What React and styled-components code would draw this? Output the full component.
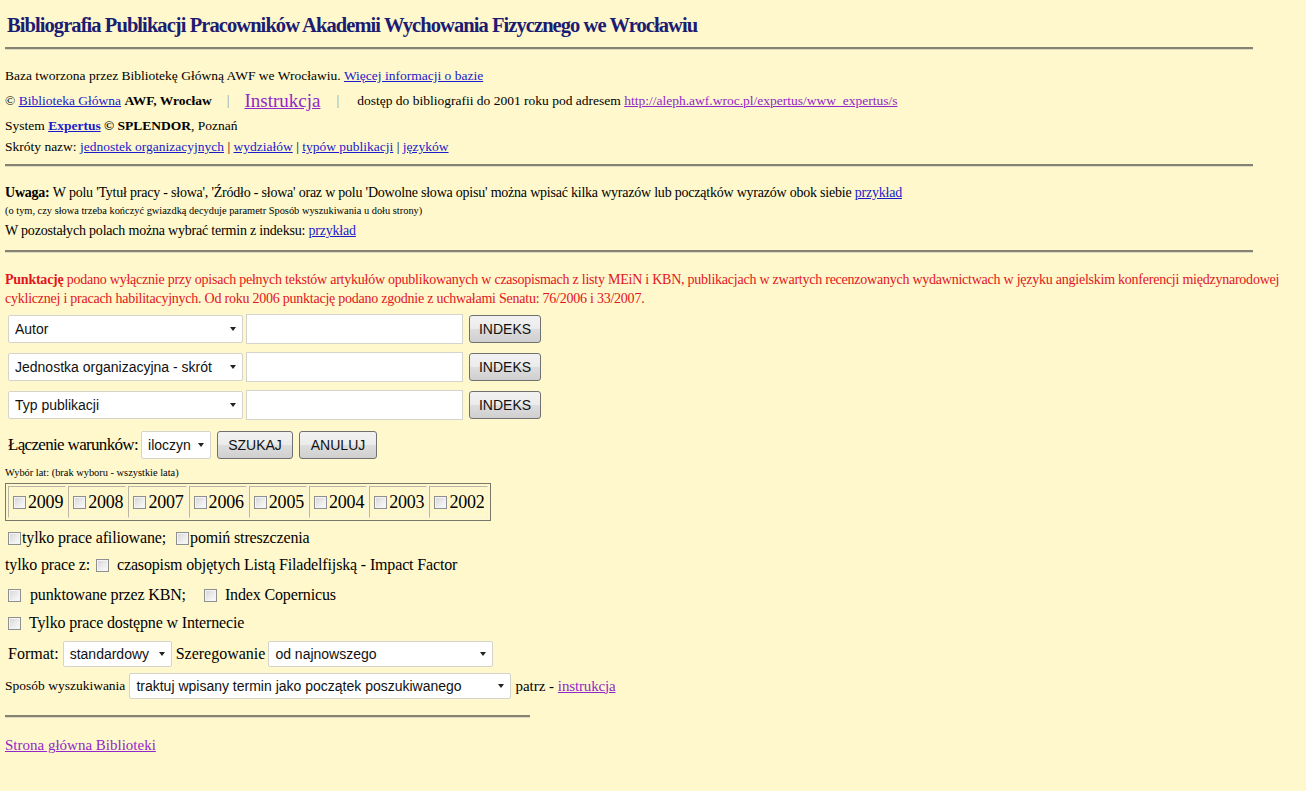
import React from "react";
import styled, { createGlobalStyle } from "styled-components";

const Global = createGlobalStyle`
  html, body { margin: 0; padding: 0; background: #fff8cc; }
  body { font-family: "Liberation Serif", "Times New Roman", serif; color: #000; }
  * { box-sizing: border-box; }
`;

const Page = styled.div`
  padding: 4px 0 0 5px;
  min-height: 791px;
  background: #fff8cc;
`;

const Title = styled.h1`
  margin: 0;
  height: 42px;
  line-height: 42px;
  font-size: 20.5px;
  letter-spacing: -0.93px;
  font-weight: bold;
  color: #1c1c72;
  padding-left: 2px;
  white-space: nowrap;
`;

const Rule = styled.div`
  width: ${(p) => p.$w || 1248}px;
  margin-top: ${(p) => p.$mt || 1}px;
  margin-bottom: 1px;
  height: 0;
  border-top: 2px solid #85836f;
  border-bottom: 1px solid #dddac2;
`;

const Line = styled.div`
  height: ${(p) => p.$h}px;
  line-height: ${(p) => p.$h}px;
  margin-top: ${(p) => p.$mt || 0}px;
  font-size: ${(p) => p.$fs || 13.5}px;
  letter-spacing: ${(p) => p.$ls || 0}px;
  white-space: nowrap;
  display: flex;
  align-items: center;
  padding-left: ${(p) => p.$pl || 0}px;
`;

const Link = styled.a`
  color: ${(p) => (p.$visited ? "#9227c9" : "#1b1bcc")};
  text-decoration: underline;
  font-size: ${(p) => (p.$fs ? p.$fs + "px" : "inherit")};
  cursor: pointer;
`;

const Bold = styled.b`
  font-weight: bold;
`;

const Sep = styled.span`
  color: #9a9a9a;
  margin: 0 ${(p) => p.$m}px;
  font-size: 14px;
`;

const Gap = styled.span`
  display: inline-block;
  width: ${(p) => p.$w}px;
`;

const Tiny = styled.div`
  height: ${(p) => p.$h}px;
  line-height: ${(p) => p.$h}px;
  margin-top: ${(p) => p.$mt || 0}px;
  font-size: ${(p) => p.$fs || 10.4}px;
  white-space: nowrap;
`;

const Red = styled.p`
  margin: 17px 0 0 0;
  color: #e3141c;
  font-size: 14px;
  letter-spacing: -0.24px;
  line-height: 19px;
  white-space: nowrap;
`;

const FieldRow = styled.div`
  height: 38px;
  display: flex;
  align-items: center;
  padding-left: 3px;
  margin-top: ${(p) => p.$mt || 0}px;
`;

const SelectWrap = styled.span`
  position: relative;
  display: inline-flex;
  align-items: center;
  width: ${(p) => p.$w}px;
  height: ${(p) => p.$hh || 28}px;
  margin-right: ${(p) => p.$mr || 0}px;
  flex: none;
`;

const NativeSelect = styled.select`
  appearance: none;
  -webkit-appearance: none;
  width: 100%;
  height: 100%;
  border: 1px solid #d4d4cc;
  border-radius: 2px;
  background: #fff;
  font-family: "Liberation Sans", Arial, sans-serif;
  font-size: 14px;
  color: #111;
  padding: 0 18px 0 6px;
  outline: none;
`;

const Arrow = styled.span`
  position: absolute;
  right: 7px;
  top: 50%;
  transform: translateY(-50%);
  width: 0;
  height: 0;
  border-left: 3.5px solid transparent;
  border-right: 3.5px solid transparent;
  border-top: 4px solid #222;
  pointer-events: none;
`;

function Select({ w, h, mr, value }) {
  return (
    <SelectWrap $w={w} $hh={h} $mr={mr}>
      <NativeSelect defaultValue={value}>
        <option>{value}</option>
      </NativeSelect>
      <Arrow />
    </SelectWrap>
  );
}

const TextInput = styled.input`
  width: 217px;
  height: 30px;
  border: 1px solid #d4d4cc;
  background: #fff;
  margin-right: 6px;
  flex: none;
  outline: none;
`;

const Button = styled.button`
  width: ${(p) => p.$w}px;
  height: 28px;
  margin-right: ${(p) => p.$mr || 0}px;
  border: 1px solid #707070;
  border-radius: 3px;
  background: linear-gradient(#f2f2f2 0%, #ebebeb 48%, #dddddd 52%, #cfcfcf 100%);
  font-family: "Liberation Sans", Arial, sans-serif;
  font-size: 14px;
  color: #111;
  padding: 0;
  flex: none;
`;

const Label = styled.span`
  font-size: ${(p) => p.$fs || 16}px;
  letter-spacing: ${(p) => p.$ls || 0}px;
  margin-right: ${(p) => p.$mr || 0}px;
  margin-left: ${(p) => p.$ml || 0}px;
`;

const YearTable = styled.table`
  margin-top: 3px;
  border: 1px solid #77776a;
  border-spacing: 2px;
  background: #fff8cc;
  height: 38px;
`;

const YearCell = styled.td`
  border: 1px solid #b9b7a3;
  border-right-color: #f6f3de;
  border-bottom-color: #f6f3de;
  padding: 0 2px 0 4px;
  height: 30px;
  font-size: 18px;
  letter-spacing: -0.2px;
  white-space: nowrap;
  vertical-align: middle;
`;

const Box = styled.input.attrs({ type: "checkbox" })`
  appearance: none;
  -webkit-appearance: none;
  width: 13px;
  height: 13px;
  margin: 0 ${(p) => p.$mr ?? 2}px 0 ${(p) => p.$ml ?? 0}px;
  border: 1px solid #8e8f8f;
  background: linear-gradient(135deg, #d4d4d4 0%, #eeeeee 60%, #fbfbfb 100%);
  box-shadow: inset 0 0 0 1px #f4f4f4;
  vertical-align: -1px;
  flex: none;
`;

const CheckLine = styled.div`
  height: ${(p) => p.$h || 28}px;
  margin-top: ${(p) => p.$mt || 0}px;
  display: flex;
  align-items: center;
  font-size: 16px;
  letter-spacing: -0.15px;
  white-space: nowrap;
  padding-left: ${(p) => p.$pl || 0}px;
`;

const years = ["2009", "2008", "2007", "2006", "2005", "2004", "2003", "2002"];

export default function App() {
  return (
    <>
      <Global />
      <Page>
        <Title>Bibliografia Publikacji Pracowników Akademii Wychowania Fizycznego we Wrocławiu</Title>
        <Rule />

        <Line $h={22} $mt={15}>
          Baza tworzona przez Bibliotekę Główną AWF we Wrocławiu.&nbsp;<Link>Więcej informacji o bazie</Link>
        </Line>
        <Line $h={28}>
          ©&nbsp;<Link>Biblioteka Główna</Link>&nbsp;<Bold>AWF, Wrocław</Bold>
          <Sep $m={15}>|</Sep>
          <Link $visited $fs={19}>Instrukcja</Link>
          <Sep $m={16}>|</Sep>
          <Gap $w={2} />
          dostęp do bibliografii do 2001 roku pod adresem&nbsp;
          <Link $visited>http://aleph.awf.wroc.pl/expertus/www_expertus/s</Link>
        </Line>
        <Line $h={22}>
          System&nbsp;<Link><Bold>Expertus</Bold></Link>&nbsp;<Bold>© SPLENDOR</Bold>, Poznań
        </Line>
        <Line $h={20}>
          Skróty nazw:&nbsp;<Link>jednostek organizacyjnych</Link>&nbsp;|&nbsp;<Link>wydziałów</Link>&nbsp;|&nbsp;
          <Link>typów publikacji</Link>&nbsp;|&nbsp;<Link>języków</Link>
        </Line>
        <Rule $mt={7} />

        <Line $h={22} $mt={15} $fs={14} $ls={-0.22}>
          <Bold>Uwaga:</Bold>&nbsp;W polu 'Tytuł pracy - słowa', 'Źródło - słowa' oraz w polu 'Dowolne słowa opisu' można wpisać kilka wyrazów lub początków wyrazów obok siebie&nbsp;
          <Link>przykład</Link>
        </Line>
        <Tiny $h={14}>
          (o tym, czy słowa trzeba kończyć gwiazdką decyduje parametr Sposób wyszukiwania u dołu strony)
        </Tiny>
        <Line $h={22} $mt={2} $fs={14} $ls={-0.2}>
          W pozostałych polach można wybrać termin z indeksu:&nbsp;<Link>przykład</Link>
        </Line>
        <Rule $mt={8} />

        <Red>
          <Bold>Punktację</Bold> podano wyłącznie przy opisach pełnych tekstów artykułów opublikowanych w czasopismach z listy MEiN i KBN, publikacjach w zwartych recenzowanych wydawnictwach w języku angielskim konferencji międzynarodowej
          <br />
          cyklicznej i pracach habilitacyjnych. Od roku 2006 punktację podano zgodnie z uchwałami Senatu: 76/2006 i 33/2007.
        </Red>

        <FieldRow $mt={2}>
          <Select w={235} mr={3} value="Autor" />
          <TextInput />
          <Button $w={72}>INDEKS</Button>
        </FieldRow>
        <FieldRow>
          <Select w={235} mr={3} value="Jednostka organizacyjna - skrót" />
          <TextInput />
          <Button $w={72}>INDEKS</Button>
        </FieldRow>
        <FieldRow>
          <Select w={235} mr={3} value="Typ publikacji" />
          <TextInput />
          <Button $w={72}>INDEKS</Button>
        </FieldRow>

        <CheckLine $h={36} $mt={3} $pl={3}>
          <Label $fs={17} $ls={-0.67} $mr={3}>Łączenie warunków:</Label>
          <Select w={70} mr={6} value="iloczyn" />
          <Button $w={76} $mr={6}>SZUKAJ</Button>
          <Button $w={78}>ANULUJ</Button>
        </CheckLine>

        <Tiny $h={14} $mt={3}>
          Wybór lat: (brak wyboru - wszystkie lata)
        </Tiny>
        <YearTable>
          <tbody>
            <tr>
              {years.map((y) => (
                <YearCell key={y}>
                  <Box $mr={2} />
                  {y}
                </YearCell>
              ))}
            </tr>
          </tbody>
        </YearTable>

        <CheckLine $h={26} $mt={4} $pl={3}>
          <Box $mr={1} />
          tylko prace afiliowane;
          <Gap $w={10} />
          <Box $mr={1} />
          pomiń streszczenia
        </CheckLine>
        <CheckLine $h={28}>
          tylko prace z:
          <Box $ml={6} $mr={8} />
          czasopism objętych Listą Filadelfijską - Impact Factor
        </CheckLine>
        <CheckLine $h={28} $mt={2} $pl={3}>
          <Box $mr={9} />
          punktowane przez KBN;
          <Gap $w={18} />
          <Box $mr={8} />
          Index Copernicus
        </CheckLine>
        <CheckLine $h={28} $pl={3}>
          <Box $mr={8} />
          Tylko prace dostępne w Internecie
        </CheckLine>

        <CheckLine $h={32} $mt={1} $pl={3}>
          <Label $mr={4}>Format:</Label>
          <Select w={109} h={26} mr={4} value="standardowy" />
          <Label $mr={3}>Szeregowanie</Label>
          <Select w={225} h={26} value="od najnowszego" />
        </CheckLine>
        <CheckLine $h={32}>
          <Label $fs={13.5} $mr={4}>Sposób wyszukiwania</Label>
          <Select w={382} h={26} mr={4} value="traktuj wpisany termin jako początek poszukiwanego" />
          <Label $fs={15}>patrz -&nbsp;</Label>
          <Link $visited $fs={15}>instrukcja</Link>
        </CheckLine>

        <Rule $w={525} $mt={13} />
        <Line $h={24} $mt={15} $fs={15}>
          <Link $visited>Strona główna Biblioteki</Link>
        </Line>
      </Page>
    </>
  );
}
